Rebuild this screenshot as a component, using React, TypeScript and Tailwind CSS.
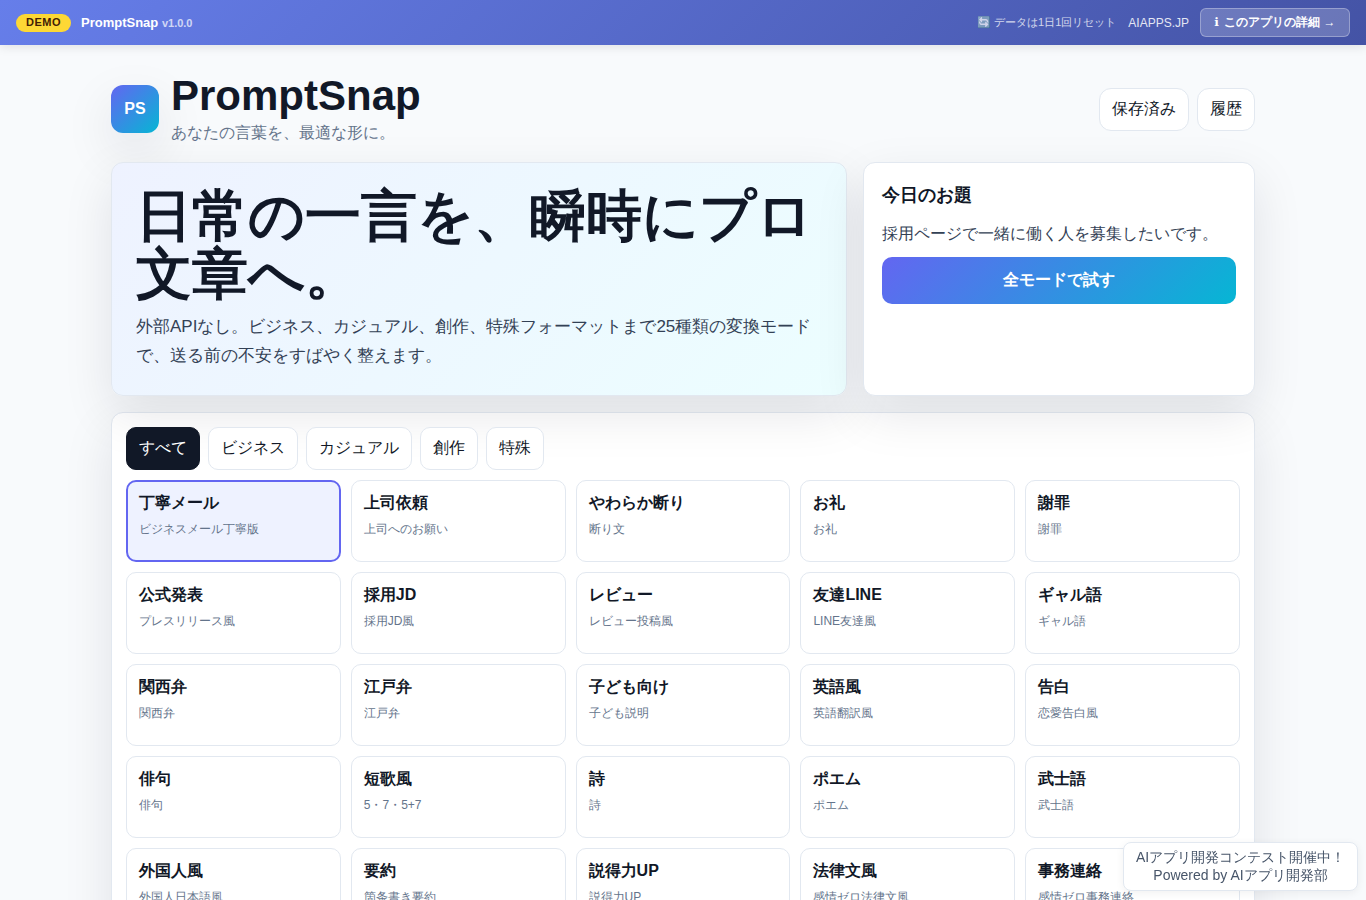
import React from 'react';

const MODES = [
  { title: '丁寧メール', desc: 'ビジネスメール丁寧版' },
  { title: '上司依頼', desc: '上司へのお願い' },
  { title: 'やわらか断り', desc: '断り文' },
  { title: 'お礼', desc: 'お礼' },
  { title: '謝罪', desc: '謝罪' },
  { title: '公式発表', desc: 'プレスリリース風' },
  { title: '採用JD', desc: '採用JD風' },
  { title: 'レビュー', desc: 'レビュー投稿風' },
  { title: '友達LINE', desc: 'LINE友達風' },
  { title: 'ギャル語', desc: 'ギャル語' },
  { title: '関西弁', desc: '関西弁' },
  { title: '江戸弁', desc: '江戸弁' },
  { title: '子ども向け', desc: '子ども説明' },
  { title: '英語風', desc: '英語翻訳風' },
  { title: '告白', desc: '恋愛告白風' },
  { title: '俳句', desc: '俳句' },
  { title: '短歌風', desc: '5・7・5+7' },
  { title: '詩', desc: '詩' },
  { title: 'ポエム', desc: 'ポエム' },
  { title: '武士語', desc: '武士語' },
  { title: '外国人風', desc: '外国人日本語風' },
  { title: '要約', desc: '箇条書き要約' },
  { title: '説得力UP', desc: '説得力UP' },
  { title: '法律文風', desc: '感情ゼロ法律文風' },
  { title: '事務連絡', desc: '感情ゼロ事務連絡' },
];

const TABS = ['すべて', 'ビジネス', 'カジュアル', '創作', '特殊'];

const App: React.FC = () => {
  return (
    <div className="min-h-screen bg-[#f8fafc] text-[#111827] font-['Liberation_Sans',sans-serif]">
      <header className="h-[45px] flex items-center justify-between px-4 bg-[linear-gradient(135deg,#667eea,#4453a5)] shadow-[0_2px_10px_rgba(0,0,0,0.1)] text-white">
        <div className="flex items-center gap-2.5">
          <span className="h-[18px] px-2.5 flex items-center rounded-full bg-[#fdd835] text-[#422006] text-[11px] font-bold tracking-[0.5px]">DEMO</span>
          <span className="text-[13px] font-bold">
            PromptSnap <span className="text-[11px] opacity-70">v1.0.0</span>
          </span>
        </div>
        <div className="flex items-center gap-3">
          <span className="text-[11px] opacity-75">🔄 データは1日1回リセット</span>
          <span className="text-xs opacity-85">AIAPPS.JP</span>
          <a className="-ml-px h-[29px] w-[150px] pb-px flex items-center justify-center rounded-md border border-white/30 bg-white/20 text-xs font-bold">
            <span className="mr-0.5 font-['DejaVu_Sans',sans-serif]">ℹ</span>&nbsp;このアプリの詳細 →
          </a>
        </div>
      </header>

      <main className="w-[1144px] mx-auto pt-7">
        <div className="flex items-start justify-between h-[73px]">
          <div className="flex items-start gap-3">
            <div className="mt-3 w-12 h-12 rounded-xl flex items-center justify-center bg-[linear-gradient(135deg,#6366f1,#06b6d4)] text-white font-bold shadow-[0_18px_50px_rgba(15,23,42,0.1)]">PS</div>
            <div className="-mt-0.5">
              <h1 className="text-[42px] leading-[50px] font-bold">PromptSnap</h1>
              <p className="text-base leading-6 text-[#64748b]">あなたの言葉を、最適な形に。</p>
            </div>
          </div>
          <div className="flex gap-2 mt-[15px]">
            <button className="h-[43px] px-3 pb-0.5 rounded-xl border border-[#e2e8f0] bg-white text-base">保存済み</button>
            <button className="h-[43px] px-3 pb-0.5 rounded-xl border border-[#e2e8f0] bg-white text-base">履歴</button>
          </div>
        </div>

        <section className="grid grid-cols-[736px_392px] gap-4 mt-4">
          <div className="h-[234px] p-6 rounded-xl border border-[#e2e8f0] bg-[linear-gradient(135deg,#eef2ff,#ecfeff)] shadow-[0_18px_50px_rgba(15,23,42,0.1)]">
            <h2 className="text-[56px] leading-[58px] font-bold">日常の一言を、瞬時にプロ文章へ。</h2>
            <p className="mt-[9px] text-[17px] leading-[29px] text-[#334155]">外部APIなし。ビジネス、カジュアル、創作、特殊フォーマットまで25種類の変換モードで、送る前の不安をすばやく整えます。</p>
          </div>
          <div className="h-[234px] p-[18px] rounded-xl border border-[#e2e8f0] bg-white shadow-[0_18px_50px_rgba(15,23,42,0.1)]">
            <h3 className="text-lg leading-[28px] font-bold">今日のお題</h3>
            <p className="mt-[13px] text-base leading-6 text-[#334155]">採用ページで一緒に働く人を募集したいです。</p>
            <button className="mt-[11px] w-full h-[47px] pb-0.5 rounded-[10px] bg-[linear-gradient(135deg,#6366f1,#06b6d4)] text-white font-bold text-base">全モードで試す</button>
          </div>
        </section>

        <section className="mt-4 p-3.5 rounded-xl border border-[#e2e8f0] bg-white shadow-[0_18px_50px_rgba(15,23,42,0.1)]">
          <div className="flex gap-2">
            {TABS.map((t, i) => (
              <button
                key={t}
                className={i === 0
                  ? 'h-[43px] px-3 pb-0.5 rounded-[10px] border border-[#111827] bg-[#111827] text-white text-base'
                  : 'h-[43px] px-3 pb-0.5 rounded-[10px] border border-[#e2e8f0] bg-white text-base'}
              >
                {t}
              </button>
            ))}
          </div>
          <div className="grid grid-cols-5 gap-2.5 mt-2.5">
            {MODES.map((m, i) => (
              <div
                key={m.title}
                className={i === 0
                  ? 'h-[82px] p-[11px] rounded-[10px] border-2 border-[#6366f1] bg-[#eef2ff]'
                  : 'h-[82px] p-3 rounded-[10px] border border-[#e2e8f0] bg-white'}
              >
                <div className="text-base leading-5 font-bold">{m.title}</div>
                <div className="mt-2 text-xs leading-4 text-[#64748b]">{m.desc}</div>
              </div>
            ))}
          </div>
        </section>
      </main>

      <div className="fixed right-2 bottom-[9px] w-[235px] h-[49px] pb-0.5 flex items-center justify-center text-center rounded-lg border border-[#e2e8f0] bg-white text-sm leading-[18px] text-[#475569] shadow-[0_2px_8px_rgba(0,0,0,0.06)]">
        <div>AIアプリ開発コンテスト開催中！<br />Powered by AIアプリ開発部</div>
      </div>
    </div>
  );
};

export default App;
